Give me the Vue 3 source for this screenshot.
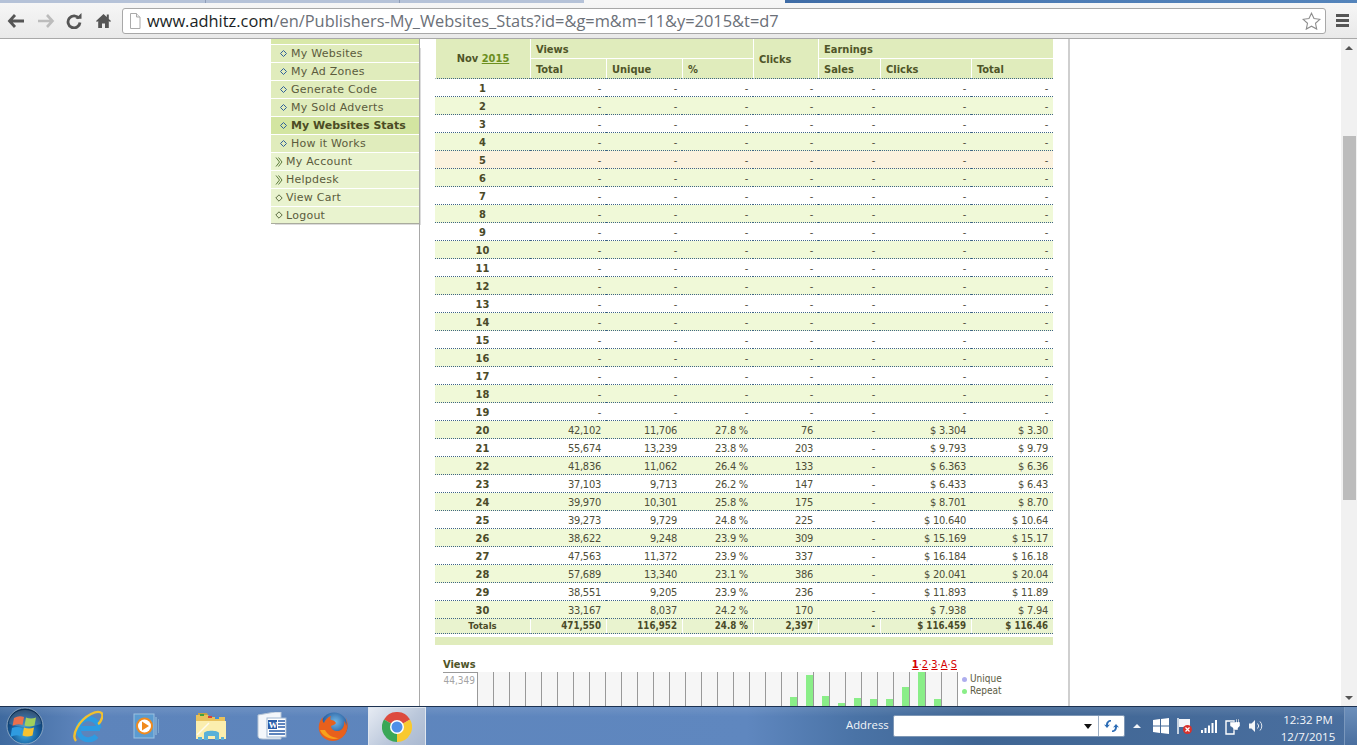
<script setup>
const menuSub = ['My Websites', 'My Ad Zones', 'Generate Code', 'My Sold Adverts', 'My Websites Stats', 'How it Works']
const menuMain = [
  { label: 'My Account', kind: 'chev' },
  { label: 'Helpdesk', kind: 'chev' },
  { label: 'View Cart', kind: 'dia' },
  { label: 'Logout', kind: 'dia' }
]
const filled = {
  20: ['42,102', '11,706', '27.8 %', '76', '-', '$ 3.304', '$ 3.30'],
  21: ['55,674', '13,239', '23.8 %', '203', '-', '$ 9.793', '$ 9.79'],
  22: ['41,836', '11,062', '26.4 %', '133', '-', '$ 6.363', '$ 6.36'],
  23: ['37,103', '9,713', '26.2 %', '147', '-', '$ 6.433', '$ 6.43'],
  24: ['39,970', '10,301', '25.8 %', '175', '-', '$ 8.701', '$ 8.70'],
  25: ['39,273', '9,729', '24.8 %', '225', '-', '$ 10.640', '$ 10.64'],
  26: ['38,622', '9,248', '23.9 %', '309', '-', '$ 15.169', '$ 15.17'],
  27: ['47,563', '11,372', '23.9 %', '337', '-', '$ 16.184', '$ 16.18'],
  28: ['57,689', '13,340', '23.1 %', '386', '-', '$ 20.041', '$ 20.04'],
  29: ['38,551', '9,205', '23.9 %', '236', '-', '$ 11.893', '$ 11.89'],
  30: ['33,167', '8,037', '24.2 %', '170', '-', '$ 7.938', '$ 7.94']
}
const blank = ['-', '-', '-', '-', '-', '-', '-']
const rows = Array.from({ length: 30 }, (_, i) => ({ day: i + 1, cells: filled[i + 1] || blank }))
const totals = ['471,550', '116,952', '24.8 %', '2,397', '-', '$ 116.459', '$ 116.46']
const colWidths = [95, 76, 76, 71, 65, 62, 91, 82]
const barTops = { 20: 25, 21: 3, 22: 24, 23: 31, 24: 26, 25: 27, 26: 27, 27: 15, 28: 0, 29: 27 }
const days = Array.from({ length: 30 }, (_, i) => ({ day: i + 1, h: barTops[i + 1] === undefined ? 0 : 34 - barTops[i + 1] }))
</script>

<template>
  <div class="screen">
    <div class="tabstrip">
      <span class="tab tab-a"></span><span class="tab tab-b"></span><span class="tab tab-c"></span>
      <span class="tab-active"></span>
      <span class="tab-rest"></span>
    </div>

    <div class="toolbar">
      <svg class="nav-ic nav-back" width="18" height="16" viewBox="0 0 18 16"><path d="M8 2 2.500 8 8 14M3 8h14" fill="none" stroke="#555" stroke-width="2.800"/></svg>
      <svg class="nav-ic nav-fwd" width="18" height="16" viewBox="0 0 18 16"><path d="M10 2l5.500 6L10 14M15 8H1" fill="none" stroke="#bcbcbc" stroke-width="2.600"/></svg>
      <svg class="nav-ic nav-reload" width="16" height="16" viewBox="0 0 16 16"><path d="M13 5.500A6 6 0 1 0 14 9.500" fill="none" stroke="#555" stroke-width="2.800"/><path d="M9.500 5.800h6V0z" fill="#555"/></svg>
      <svg class="nav-ic nav-home" width="15" height="15" viewBox="0 0 15 15"><path d="M7.500 1 0 8l1 1 1.200-1v7h3.800v-4.500h3V15h3.800V8l1.200 1 1-1-2.200-2V1.500h-2V4z" fill="#555"/></svg>
      <div class="urlbar">
        <svg class="page-ic" width="12" height="16" viewBox="0 0 12 16"><path d="M1.500.5h6l3.500 3.500v11.500h-9.500z" fill="#fff" stroke="#aaa"/><path d="M7.500.5V4H11" fill="#eee" stroke="#aaa"/></svg>
        <span class="url"><span class="url-host">www.adhitz.com</span>/en/Publishers-My_Websites_Stats?id=&amp;g=m&amp;m=11&amp;y=2015&amp;t=d7</span>
        <svg class="star-ic" width="19" height="18" viewBox="0 0 19 18"><path d="M9.500 1.200l2.500 5.400 5.800.7-4.300 4 1.200 5.800-5.200-2.900-5.200 2.900 1.200-5.800-4.300-4 5.800-.7z" fill="#fff" stroke="#8d8d8d" stroke-width="1.100"/></svg>
      </div>
      <div class="hamburger"><i></i><i></i><i></i></div>
    </div>

    <div class="viewport">
      <div class="page-area">
        <div class="page">
          <aside class="side">
            <div class="side-cap"></div>
            <ul class="side-list">
              <li v-for="m in menuSub" :key="m" class="sub" :class="{ on: m === 'My Websites Stats' }">
                <svg class="dia" width="7" height="7" viewBox="0 0 7 7"><path d="M3.500.5l3 3-3 3-3-3z" fill="none" stroke="#31619a"/></svg>
                <span>{{ m }}</span>
              </li>
              <li v-for="m in menuMain" :key="m.label" class="top">
                <svg v-if="m.kind === 'chev'" class="chev" width="8" height="10" viewBox="0 0 8 10"><path d="M1 .5 4.500 5 1 9.500M3.500.5 7 5 3.500 9.500" fill="none" stroke="#5c7a3a"/></svg>
                <svg v-else class="chev" width="8" height="8" viewBox="0 0 8 8"><path d="M4 .8 7.200 4 4 7.200.8 4z" fill="none" stroke="#5a6a40"/></svg>
                <span>{{ m.label }}</span>
              </li>
            </ul>
          </aside>

          <main class="content">
            <table class="stats">
              <colgroup><col v-for="(w, i) in colWidths" :key="i" :style="{ width: w + 'px' }" /></colgroup>
              <thead>
                <tr class="h1">
                  <th rowspan="2" class="month">Nov <a class="year">2015</a></th>
                  <th colspan="3">Views</th>
                  <th rowspan="2">Clicks</th>
                  <th colspan="3">Earnings</th>
                </tr>
                <tr class="h2">
                  <th>Total</th><th>Unique</th><th>%</th>
                  <th>Sales</th><th>Clicks</th><th>Total</th>
                </tr>
              </thead>
              <tbody>
                <tr v-for="r in rows" :key="r.day" :class="{ alt: r.day % 2 === 0, peach: r.day === 5 }">
                  <td class="day">{{ r.day }}</td>
                  <td v-for="(c, i) in r.cells" :key="i">{{ c }}</td>
                </tr>
                <tr class="totals">
                  <td class="tot-label">Totals</td>
                  <td v-for="(c, i) in totals" :key="i">{{ c }}</td>
                </tr>
              </tbody>
            </table>
            <div class="band"></div>

            <section class="chart">
              <div class="chart-head">
                <span class="chart-title">Views</span>
                <span class="chart-links"><a class="b">1</a>·<a>2</a>·<a>3</a>·<a>A</a>·<a>S</a></span>
              </div>
              <div class="chart-body">
                <div class="axis">44,349</div>
                <div class="plot">
                  <div v-for="d in days" :key="d.day" class="slot">
                    <div v-if="d.h" class="bar" :style="{ height: d.h + 'px' }"></div>
                  </div>
                </div>
                <div class="legend">
                  <div class="leg"><i class="dot u"></i>Unique</div>
                  <div class="leg"><i class="dot r"></i>Repeat</div>
                </div>
              </div>
            </section>
          </main>
        </div>
      </div>

      <div class="scrollbar">
        <span class="arrow up"></span>
        <span class="thumb"></span>
        <span class="arrow down"></span>
      </div>
    </div>

    <footer class="taskbar">
      <div class="tasks">
        <svg class="orb" width="38" height="38" viewBox="0 0 38 38">
          <defs>
            <radialGradient id="orbg" cx="50%" cy="70%" r="65%"><stop offset="0" stop-color="#3fb0e6"/><stop offset=".6" stop-color="#155a9a"/><stop offset="1" stop-color="#0c2f56"/></radialGradient>
          </defs>
          <circle cx="19" cy="19" r="18" fill="url(#orbg)" stroke="#9fb6cc" stroke-width=".8"/>
          <path d="M8 11q5-3 10-1l-1.500 8q-5-2-10 1z" fill="#e8552c"/>
          <path d="M20 10.500q5 2 10 0l-1.500 8q-5 2-10 0z" fill="#8fc63d"/>
          <path d="M6 21q5-2 10 0l-1.500 8q-5-2-10 1z" fill="#2f9be0"/>
          <path d="M18 20.500q5 2 10 0l-1.500 8q-5 2-10 0z" fill="#f7c230"/>
          <path d="M3 17a16 14 0 0 1 32 0q-16 6-32 0z" fill="#fff" opacity=".16"/>
        </svg>
        <div class="task">
          <svg width="32" height="34" viewBox="0 0 32 34">
            <path d="M10 19.500H29M28 19.500A10.500 10.500 0 1 0 25.500 27" fill="none" stroke="#2d9be2" stroke-width="5"/>
            <path d="M5 32C0 26 8 11 20 5c8-4 13-2 11 4-1 3-2 5-4 6" fill="none" stroke="#f0c030" stroke-width="2.400"/>
          </svg>
        </div>
        <div class="task">
          <svg width="28" height="28" viewBox="0 0 28 28">
            <rect x="1" y="2" width="20" height="24" fill="#5b9bd0" stroke="#9cc2e2"/>
            <path d="M22 5h2v18h-2zM25 7h1v14h-1z" fill="#7ba6cf"/>
            <circle cx="11.500" cy="14" r="8.500" fill="#f08a1d"/>
            <circle cx="11.500" cy="14" r="6.500" fill="#fff"/>
            <path d="M9 9.500l7 4.500-7 4.500z" fill="#f08a1d"/>
          </svg>
        </div>
        <div class="task">
          <svg width="32" height="30" viewBox="0 0 32 30">
            <path d="M1 4h12l2 2h15v22H1z" fill="#e8c15c"/>
            <path d="M3 2h9l1 2H3z" fill="#c9a13f"/>
            <rect x="5" y="3" width="4" height="2" fill="#42a33c"/><rect x="13" y="5" width="4" height="2" fill="#d8423a"/><rect x="20" y="6" width="4" height="2" fill="#3f8fd8"/>
            <path d="M1 10h30v18H1z" fill="#fbeeae"/>
            <path d="M9 22c1-3 14-3 15 0v7h-4v-4h-7v4H9z" fill="#5ab1d8"/>
            <path d="M3 26h4v3H3zM26 26h3v3h-3z" fill="#5ab1d8"/>
            <path d="M2 24 14 12" stroke="#fff" stroke-width="1.500" opacity=".8"/>
          </svg>
        </div>
        <div class="task">
          <svg width="30" height="28" viewBox="0 0 30 28">
            <path d="M1 3 18 0h6v27H6q-5 0-5-3z" fill="#f4f7fb" stroke="#b5c4d6"/>
            <rect x="10" y="6" width="19" height="19" fill="#fff" stroke="#9db5d1"/>
            <rect x="11" y="8" width="9" height="9" fill="#2a5ca8"/>
            <text x="11.500" y="16" class="word-w">W</text>
            <path d="M21 9h7M21 12h7M21 15h7M12 19h16M12 22h16" stroke="#2a5ca8" stroke-width="1.500"/>
          </svg>
        </div>
        <div class="task">
          <svg width="32" height="32" viewBox="0 0 32 32">
            <defs><radialGradient id="ffb" cx="55%" cy="35%" r="55%"><stop offset="0" stop-color="#6fb6e6"/><stop offset="1" stop-color="#1c4f93"/></radialGradient></defs>
            <circle cx="16" cy="16" r="13.500" fill="url(#ffb)"/>
            <path d="M27 6c5 8 3 20-7 24-8 3-17-1-19-10C0 15 2 10 5 7c-1 3 0 5 1 6 1-3 4-6 7-7-1 2-1 3 0 4 2 0 4 1 5 3-1 2-4 2-5 3 0 3 3 5 6 5 5 0 8-5 7-10 2 2 2 4 2 5 1-3 1-6-1-10z" fill="#e8601c"/>
            <path d="M2 20c3 7 12 11 19 8-5 0-11-2-14-8z" fill="#f7a11a"/>
          </svg>
        </div>
        <div class="task task-on">
          <svg width="30" height="30" viewBox="-15 -15 30 30">
            <path d="M0 0 -13 -7.500A15 15 0 0 1 13 -7.500z" fill="#dd4b3e"/>
            <path d="M0 0 13 -7.500A15 15 0 0 1 0 15z" fill="#f8c92f"/>
            <path d="M0 0 0 15A15 15 0 0 1 -13 -7.500z" fill="#3aa757"/>
            <circle r="7" fill="#fff"/>
            <circle r="5.500" fill="#4f8fe8"/>
          </svg>
        </div>
      </div>

      <div class="tray">
        <span class="addr-label">Address</span>
        <div class="addr">
          <span class="addr-field"><i class="caret"></i></span>
          <span class="addr-go">
            <svg width="15" height="14" viewBox="0 0 15 14"><path d="M7 1C4 1 2 3 2 6l-2-.5L3 9l3-3.500-2 .5c0-2 1-3.500 3-3.500z" fill="#2c6cb5"/><path d="M8 13c3 0 5-2 5-5l2 .5L12 5 9 8.500l2-.5c0 2-1 3.500-3 3.500z" fill="#2c6cb5"/></svg>
          </span>
        </div>
        <i class="tray-up"></i>
        <svg class="t-win" width="16" height="16" viewBox="0 0 16 16"><path d="M0 2l7-1v6.500H0zM8 1l8-1v7.500H8zM0 8.500h7V15l-7-1zM8 8.500h8V16l-8-1z" fill="#fff"/></svg>
        <svg class="t-flag" width="16" height="16" viewBox="0 0 16 16"><path d="M1 0v16" stroke="#fff" stroke-width="1.400"/><path d="M2 1h11v8H2z" fill="#f4f6f9"/><circle cx="10.500" cy="11.500" r="4.500" fill="#d9312b"/><path d="M8.500 9.500l4 4M12.500 9.500l-4 4" stroke="#fff" stroke-width="1.200"/></svg>
        <svg class="t-sig" width="16" height="13" viewBox="0 0 16 13"><path d="M0 10h2v3H0zM3.500 8h2v5h-2zM7 5.500h2V13H7zM10.500 3h2v10h-2zM14 0h2v13h-2z" fill="#fff"/></svg>
        <svg class="t-plug" width="15" height="17" viewBox="0 0 15 17"><path d="M1 3h8v13H1z" fill="none" stroke="#fff" stroke-width="1.400"/><path d="M5 4h6V1h1v3h1V1h1v3h1v4l-2 2v2H8v-2L5 8z" fill="#fff" stroke="#3d628f" stroke-width=".4"/></svg>
        <svg class="t-spk" width="15" height="14" viewBox="0 0 15 14"><path d="M0 4.500h2.500L6 1v12L2.500 9.500H0z" fill="#f2f5f8"/><path d="M8.500 4.500a3.500 3.500 0 0 1 0 5M11 2.500a6.500 6.500 0 0 1 0 9" fill="none" stroke="#e2e8ef" stroke-width="1"/></svg>
        <div class="clock"><span>12:32 PM</span><span>12/7/2015</span></div>
        <span class="show-desktop"></span>
      </div>
    </footer>
  </div>
</template>

<style>
html, body { margin: 0; padding: 0; background: #fff; overflow: hidden; }
</style>

<style scoped>
.screen {
  width: 1357px; height: 745px; display: flex; flex-direction: column; overflow: hidden;
  font-family: "DejaVu Sans", Verdana, sans-serif; background: #fff;
}

/* browser chrome */
.tabstrip { height: 3px; display: flex; flex: none; }
.tab { background: #b5c2d8; border-right: 1px solid #8e9db8; }
.tab-a { width: 205px; }
.tab-b { width: 193px; }
.tab-c { width: 184px; border-right: 0; }
.tab-active { width: 201px; background: #f6f6f6; }
.tab-rest { flex: 1; background: linear-gradient(90deg, #3f6ca6, #4d7cb5 50%, #5484bb); }
.toolbar {
  height: 35px; flex: none; display: flex; align-items: center; position: relative;
  background: linear-gradient(#f6f6f6, #e9e9e9); border-bottom: 1px solid #a9a9a9; box-sizing: content-box;
}
.nav-ic { flex: none; }
.nav-back { margin-left: 7px; }
.nav-fwd { margin-left: 12px; }
.nav-reload { margin-left: 11px; }
.nav-home { margin-left: 14px; }
.urlbar {
  margin-left: 11px; width: 1204px; height: 26px; box-sizing: border-box; display: flex; align-items: center;
  background: #fff; border: 1px solid #a8a8a8; border-radius: 3px;
}
.page-ic { margin-left: 6px; flex: none; }
.url {
  margin-left: 6px; font-family: "Open Sans", "Noto Sans", sans-serif; font-size: 16.400px; color: #6b7078;
  white-space: nowrap; flex: 1;
}
.url-host { color: #1b1f26; }
.star-ic { margin-right: 4px; flex: none; }
.hamburger { margin-left: 10px; width: 13px; display: flex; flex-direction: column; gap: 2px; }
.hamburger i { display: block; height: 3px; background: #555; }

/* page area */
.viewport { flex: 1; min-height: 0; display: flex; }
.page-area { flex: 1; min-width: 0; overflow: hidden; }
.page { width: 799px; margin: 0 auto; display: flex; height: 100%; }

.side { width: 148px; flex: none; }
.side-cap { height: 5px; background: #d8e8a8; border-bottom: 1px solid #fff; }
.side-list {
  list-style: none; margin: 0; padding: 0; border-bottom: 1px solid #a9ab9d;
  box-shadow: 3px 2px 0 -1px #dcdcdc;
  font-size: 11px; letter-spacing: .25px; color: #5b5b3c;
}
.side-list li { height: 17px; line-height: 17px; border-bottom: 1px solid #fff; display: flex; align-items: center; white-space: nowrap; }
.side-list li:last-child { border-bottom: 0; height: 16px; }
.sub { background: #e0ecbc; padding-left: 9px; }
.sub .dia { margin-right: 4px; flex: none; }
.sub.on { background: #d3e5a1; font-weight: 700; color: #4c4c24; letter-spacing: 0; }
.top { background: #e9f3cf; padding-left: 4px; }
.top .chev { margin-right: 3px; flex: none; }

.content {
  width: 618px; flex: none; padding: 0 15px; overflow: hidden;
  border-left: 1px solid #a8a8a8; border-right: 2px solid #cfcfcf;
}

/* table */
.stats {
  width: 618px; table-layout: fixed; border-collapse: separate; border-spacing: 0;
  font-family: "DejaVu Sans", sans-serif; font-stretch: condensed; font-size: 11px; color: #4e4e38;
}
.stats th {
  background: #e0ecbc; color: #4f5528; font-weight: 700; text-align: left; padding: 1px 0 0 5px;
  border-left: 1px solid #fff; border-bottom: 1px solid #fff; font-size: 11px; overflow: hidden;
}
.stats .h1 th { height: 18px; }
.stats .h2 th { height: 18px; border-bottom: 1px dotted #3f6585; }
.stats th:first-child { border-left: 1px solid #fff; }
.stats .month { text-align: center; padding: 0; border-bottom: 1px dotted #3f6585; }
.stats th[rowspan] { border-bottom: 1px dotted #3f6585; }
.year { color: #6c8f1e; text-decoration: underline; }
.stats td {
  height: 15px; padding: 2px 5px 0 0; text-align: right; border-bottom: 1px dotted #3f6585;
  white-space: nowrap; line-height: 15px; letter-spacing: -.25px;
}
.stats .alt td { background: #f0f9d8; }
.stats .peach td { background: #fbf2de; }
.stats td.day { text-align: center; font-weight: 700; font-size: 11px; color: #4a4a28; padding: 2px 0 0; letter-spacing: 0; }
.stats .totals td {
  height: 14px; line-height: 14px; padding-top: 0; background: #e9f3cf; font-weight: 700; color: #4a4a28;
  border-left: 1px solid #fff; font-size: 9.700px; letter-spacing: 0;
}
.stats .totals td:first-child { border-left: 0; }
.stats .totals .tot-label { text-align: center; padding: 0; font-size: 9.500px; }
.band { height: 8px; margin-top: 3px; background: #e0ecbc; }

/* chart */
.chart { margin-top: 12px; }
.chart-head { display: flex; justify-content: space-between; height: 15px; width: 522px; padding-left: 8px; align-items: center; box-sizing: border-box; }
.chart-title { font-weight: 700; font-stretch: condensed; font-size: 11px; color: #4f5528; }
.chart-links { font-size: 11px; font-stretch: condensed; color: #c00; }
.chart-links a { color: #d40000; text-decoration: underline; }
.chart-links .b { font-weight: 700; }
.chart-body { display: flex; height: 34px; padding-left: 8px; }
.axis {
  width: 34px; box-sizing: border-box; border-top: 1px solid #999; font-size: 10px; font-stretch: condensed;
  color: #a4a4a4; text-align: right; padding: 2px 2px 0 0;
}
.plot { display: flex; width: 481px; border-left: 1px solid #999; flex: none; box-sizing: border-box; }
.slot {
  width: 16px; box-sizing: border-box; background: #f6f6f6; border-right: 1px solid #999;
  display: flex; align-items: flex-end; padding-left: 8px; flex: none;
}
.bar { width: 7px; background: #8aee88; }
.legend { margin-left: 4px; font-size: 10px; font-stretch: condensed; color: #5c5c44; padding-top: 1px; }
.leg { height: 12px; line-height: 12px; display: flex; align-items: center; gap: 3px; }
.dot { width: 5px; height: 5px; border-radius: 50%; display: block; }
.dot.u { background: #aeaeee; }
.dot.r { background: #8aee88; }

/* scrollbar */
.scrollbar { width: 16px; flex: none; background: #f1f1f1; display: flex; flex-direction: column; align-items: center; padding-top: 7px; box-sizing: border-box; }
.arrow { width: 0; height: 0; border-left: 4px solid transparent; border-right: 4px solid transparent; flex: none; }
.arrow.up { border-bottom: 4px solid #555; }
.arrow.down { border-top: 4px solid #555; margin-top: auto; margin-bottom: 6px; }
.thumb { width: 13px; height: 364px; background: #bcbcbc; margin-top: 86px; flex: none; }

/* taskbar */
.taskbar {
  height: 39px; flex: none; display: flex; box-sizing: border-box; border-top: 1px solid #1c3150;
  background:
    linear-gradient(rgba(255,255,255,.1), rgba(255,255,255,0) 25%, rgba(0,0,0,0)),
    linear-gradient(90deg, #3f6a9f 0, #5d84bb 6%, #5f87bf 55%, #4a73a6 63%, #3f6593 72%, #4a6f9f 100%);
}
.tasks { display: grid; grid-template-columns: 57px 60px 60px 68px 54px 69px 58px; align-items: center; flex: none; }
.orb { margin-left: 6px; }
.task { display: flex; justify-content: center; align-items: center; height: 38px; }
.task-on {
  background: linear-gradient(135deg, #e6ebf3, #b9c6da 60%, #aab9d1);
  border: 1px solid #dfe6ef; border-bottom: 0; box-sizing: border-box;
}
.word-w { font-family: "Liberation Serif", serif; font-weight: 700; font-size: 9px; fill: #fff; }
.tray { flex: 1; display: flex; align-items: center; color: #fff; font-family: "Open Sans", "Noto Sans", sans-serif; min-width: 0; }
.addr-label { margin-left: 420px; margin-bottom: 3px; width: 42px; flex: none; font-size: 11.300px; color: #f2f5f9; white-space: nowrap; }
.addr {
  margin-left: 5px; width: 232px; height: 22px; display: flex; background: #fff; box-sizing: border-box; flex: none;
  border: 1px solid #7e97b5; border-radius: 2px;
}
.addr-field { flex: 1; position: relative; }
.caret { position: absolute; right: 6px; top: 8px; width: 0; height: 0; border-left: 4px solid transparent; border-right: 4px solid transparent; border-top: 5px solid #111; }
.addr-go { width: 25px; border-left: 1px solid #9fb0c4; display: flex; align-items: center; justify-content: center; flex: none; }
.tray-up { margin-left: 8px; width: 0; height: 0; border-left: 4px solid transparent; border-right: 4px solid transparent; border-bottom: 4px solid #f2f5f9; flex: none; }
.t-win { margin-left: 12px; flex: none; }
.t-flag { margin-left: 8px; flex: none; }
.t-sig { margin-left: 8px; flex: none; }
.t-plug { margin-left: 8px; flex: none; }
.t-spk { margin-left: 9px; flex: none; }
.clock { margin-left: 14px; margin-top: 3px; width: 60px; display: flex; flex-direction: column; align-items: center; font-size: 11.500px; line-height: 17px; color: #f4f6fa; flex: none; }
.show-desktop { margin-left: auto; width: 13px; height: 38px; background: linear-gradient(#6c8fbb, #4a6f9f); border-left: 1px solid #7b98bd; box-sizing: border-box; }
</style>
